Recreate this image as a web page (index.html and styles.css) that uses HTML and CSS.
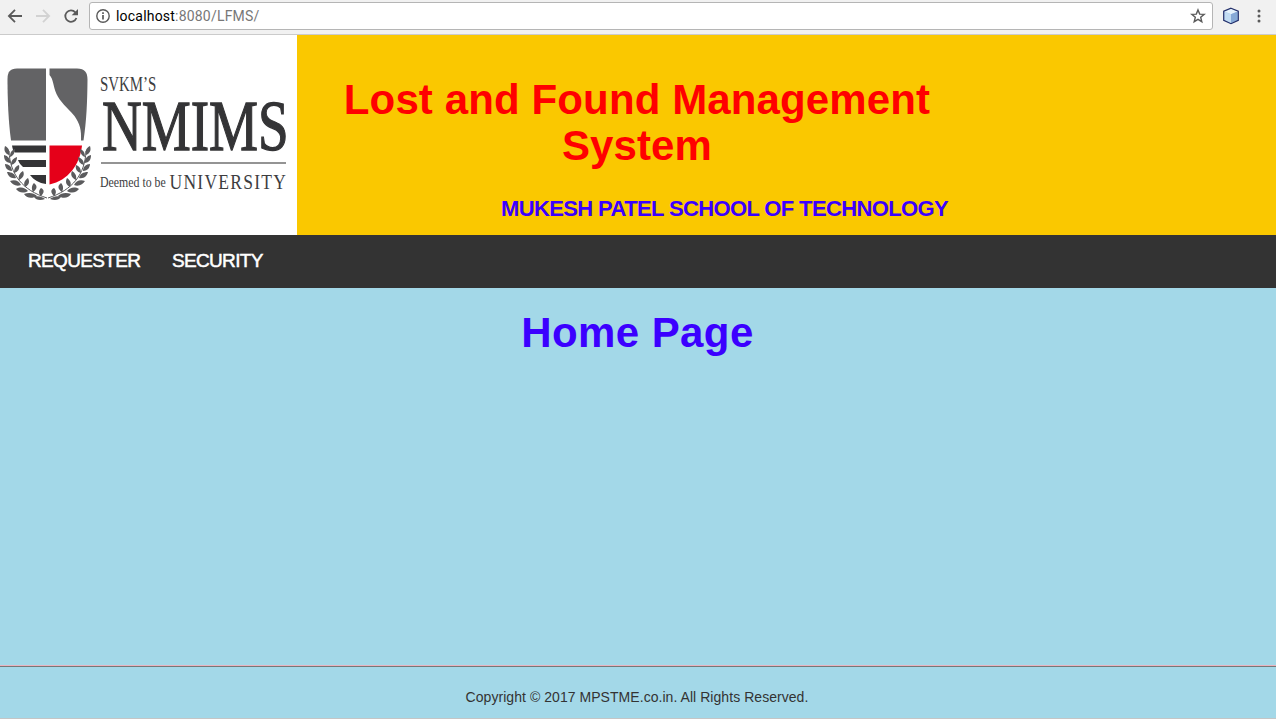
FILE: index.html
```html
<!DOCTYPE html>
<html lang="en">
<head>
<meta charset="utf-8">
<title>Lost and Found Management System</title>
<link rel="stylesheet" href="styles.css">
</head>
<body>
<div class="toolbar">
  <svg class="nav-icons" width="89" height="34" viewBox="0 0 89 34" fill="none" stroke-width="1.800">
    <path stroke="#5a5a5a" d="M22 16H9.5M15 9.900 8.900 16l6.100 6.100"/>
    <path stroke="#d2d2d2" d="M36 16h12.500M43 9.900 49.100 16l-6.100 6.100"/>
    <path stroke="#5a5a5a" d="M75.300 12.300A5.700 5.700 0 1 0 76.400 18"/>
    <path fill="#5a5a5a" d="M78 9v6.300h-6.300z"/>
  </svg>
  <div class="address">
    <svg width="16" height="16" viewBox="0 0 16 16" fill="none" stroke="#5a5a5a">
      <circle cx="8" cy="8" r="6.200" stroke-width="1.400"/>
      <path stroke-width="1.700" d="M8 7v4.500M8 4.300v1.700"/>
    </svg>
    <span class="url"><span class="host">localhost</span>:8080/LFMS/</span>
    <svg class="star" width="16" height="16" viewBox="0 0 16 16">
      <path fill="none" stroke="#5a5a5a" stroke-width="1.400" d="m8 1.900 1.700 4.200 4.500.3-3.500 2.900 1.100 4.400L8 11.300l-3.800 2.400 1.100-4.400-3.500-2.900 4.500-.3z"/>
    </svg>
  </div>
  <svg class="ext-icons" width="63" height="34" viewBox="0 0 63 34">
    <path fill="#9dbfe6" d="m18 8 7.300 3.200v9.300L18 24l-7.300-3.500v-9.300z"/>
    <path fill="#e5f2fc" d="m18 8.500 6.700 2.900-6.700 2.800-6.700-2.800z"/>
    <path fill="#c2dcf3" d="m11.300 11.500 6.700 2.800v9l-6.700-3z"/>
    <path fill="#86a9d6" d="m24.700 11.500-6.700 2.800v9l6.700-3z"/>
    <path fill="none" stroke="#25306b" stroke-width="1.200" d="m18 8.200 7.300 3v9.200L18 23.700l-7.300-3.300v-9.200z"/>
    <g fill="#5a5a5a"><circle cx="46" cy="11" r="1.500"/><circle cx="46" cy="16" r="1.500"/><circle cx="46" cy="21" r="1.500"/></g>
  </svg>
</div>
<header class="banner">
  <svg class="logo" width="297" height="200" viewBox="0 35 297 200">
    <defs>
      <g id="laurel" fill="#5b5b5d">
        <path fill="none" stroke="#5b5b5d" stroke-width="1" d="M9 151C10 174 22 190 47 198"/>
        <path d="M9 155c-5-2-5-6-4-9 4 2 5 5 4 9zM10 163c-5-1-6-4-6-8 4 1 7 4 6 8zM12 171c-5 0-7-4-7-7 4 0 7 3 7 7zM16 178c-5 1-8-2-9-6 5 0 8 2 9 6zM21 185c-5 2-9-1-11-4 5-2 9 0 11 4zM28 191c-5 3-10 1-12-2 5-3 9-1 12 2zM37 196c-5 3-11 2-13-2 5-2 10-1 13 2zM45 199c-5 2-9 1-11-2 4-2 9 0 11 2z"/>
        <path d="M10 157c0-5 2-7 5-8 0 4-2 7-5 8zM11 165c0-5 3-7 6-8 0 4-2 7-6 8zM14 173c0-5 2-7 5-8 1 4-1 7-5 8zM19 180c-1-5 1-7 4-9 2 4 0 7-4 9zM25 187c-2-4 0-7 3-9 2 4 1 7-3 9zM33 192c-2-4-1-7 1-9 4 3 3 6-1 9zM41 196c-3-3-2-6 0-8 4 2 3 5 0 8z"/>
      </g>
    </defs>
    <path fill="#636365" d="M46 68.500H17C10 68.500 7.500 72 7.500 79c0 22 1 43 3.500 61.500h35z"/>
    <path fill="#636365" d="M49.500 68.500H77c8 0 10.500 4 10.500 11-.2 22-1 42-4 61H81C81.500 130 80 124 74.500 116 67 107 60 102 56.500 94 53 86 53.500 79 49.500 75z"/>
    <path fill="#343436" d="M12 145.500h34v7H15c-2-2-2.500-4-3-7zM18 160h28v7H23c-2-2-4-4-5-7zM30 175h16v9c-7-1-12-4-16-9z"/>
    <path fill="#e50019" d="M49.500 145.500H82c-2 19-14 35-32.500 39z"/>
    <use href="#laurel"/>
    <use href="#laurel" transform="translate(95 0) scale(-1 1)"/>
    <g class="logo-text">
      <text transform="translate(100 90.500) scale(.71 1)" font-size="21">SVKM’S</text>
      <text class="logo-main" transform="translate(102 150) scale(.765 1)" font-size="72">NMIMS</text>
      <text transform="translate(100 187) scale(.79 1)" font-size="15">Deemed to be</text>
      <text transform="translate(169.500 189) scale(.835 1)" font-size="21" letter-spacing="1.500">UNIVERSITY</text>
    </g>
    <path stroke="#707070" stroke-width="1.300" d="M101 163h185"/>
  </svg>
  <div class="titles">
    <h1 class="title">Lost and Found Management System</h1>
    <h2 class="school">MUKESH PATEL SCHOOL OF TECHNOLOGY</h2>
  </div>
</header>
<nav class="menu"><a>REQUESTER</a><a>SECURITY</a></nav>
<main class="content"><h1 class="page-title">Home Page</h1></main>
<footer class="footer">Copyright © 2017 MPSTME.co.in. All Rights Reserved.</footer>
</body>
</html>
```
FILE: styles.css
```css
* { box-sizing: border-box; }
body {
  margin: 0;
  height: 719px;
  display: flex;
  flex-direction: column;
  overflow: hidden;
  background: #a3d8e8;
  font-family: "Liberation Sans", Arial, sans-serif;
}
svg { display: block; flex: none; }
.toolbar {
  display: flex;
  align-items: flex-start;
  height: 35px;
  background: #f1f1f1;
  border-bottom: 1px solid #cbcbcb;
}
.address {
  flex: 1;
  display: flex;
  align-items: center;
  height: 28px;
  margin-top: 2px;
  padding: 0 6px 0 5px;
  background: #fff;
  border: 1px solid #b5b5b5;
  border-radius: 3px;
}
.url {
  flex: 1;
  margin-left: 5px;
  font-family: Roboto, sans-serif;
  font-size: 14px;
  letter-spacing: 0.2px;
  color: #777;
}
.host { color: #000; }
.banner { display: flex; height: 200px; background: #fac800; }
.logo { background: #fff; }
.logo-text { font-family: "Liberation Serif", serif; fill: #3d3d3f; }
.logo-main { stroke: #343436; stroke-width: 1.3px; fill: #343436; }
.titles { width: 681px; padding-top: 42px; text-align: center; }
.title {
  width: 680px;
  padding: 0 30px;
  margin: 0;
  font-size: 42px;
  line-height: 46px;
  letter-spacing: 0.12px;
  color: #f00;
}
.school {
  margin: 28px 0 0;
  padding-right: 30px;
  text-align: right;
  font-size: 22px;
  line-height: 24px;
  letter-spacing: -0.63px;
  color: #3b00ff;
}
.menu {
  display: flex;
  gap: 31.5px;
  height: 53px;
  padding-left: 28px;
  background: #333;
  color: #fff;
  font-size: 19px;
  line-height: 52px;
  letter-spacing: -0.65px;
  -webkit-text-stroke: 0.5px #fff;
}
.content { flex: 1; padding: 22px 1px 0 0; text-align: center; }
.page-title {
  margin: 0;
  font-size: 42px;
  line-height: 46px;
  letter-spacing: 0.4px;
  color: #3b00ff;
}
.footer {
  height: 54px;
  padding: 22px 2px 0 0;
  border-top: 1px solid #e9b3bf;
  border-bottom: 1px solid #c5c5c5;
  box-shadow: inset 0 1px #777;
  text-align: center;
  font-size: 14px;
  line-height: 18px;
  letter-spacing: 0.05px;
  color: #333;
}
```
